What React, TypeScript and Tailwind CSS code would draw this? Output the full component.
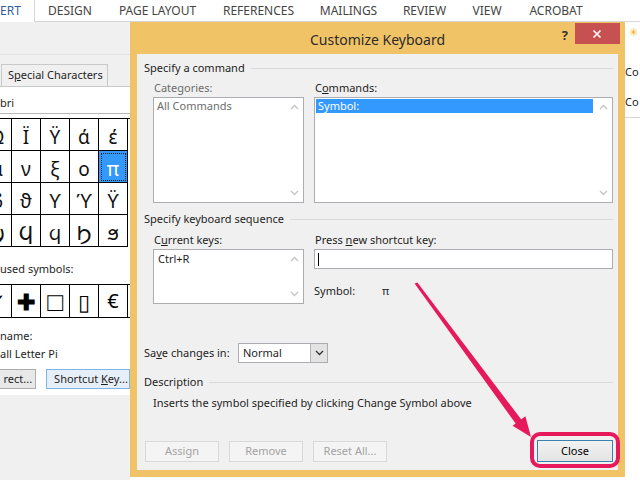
import React from 'react';

const RIBBON_TABS: [string, number][] = [
  ['DESIGN', 70],
  ['PAGE LAYOUT', 105],
  ['REFERENCES', 97],
  ['MAILINGS', 83],
  ['REVIEW', 69],
  ['VIEW', 56],
  ['ACROBAT', 82],
];

const GRID = [
  ['Ω', 'Ϊ', 'Ϋ', 'ά', 'έ'],
  ['μ', 'ν', 'ξ', 'ο', 'π'],
  ['ϐ', 'ϑ', 'ϒ', 'ϓ', 'ϔ'],
  ['ϣ', 'Ϥ', 'ϥ', 'Ϧ', 'ϧ'],
];

const RECENT = ['✓', '✚', '□', '▯', '€'];

function Chevron({ up, color = '#c4c4c4' }: { up?: boolean; color?: string }) {
  return (
    <svg width="9" height="6" viewBox="0 0 9 6">
      <polyline
        points={up ? '1,5 4.5,1.5 8,5' : '1,1 4.5,4.5 8,1'}
        fill="none"
        stroke={color}
        strokeWidth="1.3"
      />
    </svg>
  );
}

function ListBox({ className, children }: { className: string; children?: React.ReactNode }) {
  return (
    <div className={`flex border border-[#abadb3] bg-white ${className}`}>
      <div className="flex-1 p-[1px]">{children}</div>
      <div className="w-[18px] flex flex-col justify-between items-center py-[6px]">
        <Chevron up />
        <Chevron />
      </div>
    </div>
  );
}

function GroupHeading({ children }: { children: React.ReactNode }) {
  return (
    <div className="flex items-center gap-[6px] h-[16px]">
      <span className="text-[#1e1e1e]">{children}</span>
      <div className="flex-1 h-px bg-[#dadada]" />
    </div>
  );
}

function GrayButton({ label }: { label: string }) {
  return (
    <div className="w-[74px] h-[21px] flex items-center justify-center border border-[#d9d9d9] bg-[#f4f4f4] text-[#a3a3a3]">
      {label}
    </div>
  );
}

function SymbolPanel() {
  return (
    <div className="w-[130px] h-full flex flex-col bg-[#f0f0f0] overflow-hidden">
      <div className="h-[33px] shrink-0 border-b border-[#e2e2e2]" />
      <div className="h-[31px] shrink-0 flex items-end">
        <div className="w-[2px] h-[22px] border-r border-[#c9c9c9]" />
        <div className="w-[106px] h-[22px] flex items-center pl-[6px] border border-b-0 border-l-0 border-[#c9c9c9] bg-[#f0f0f0] text-[#1e1e1e] whitespace-nowrap">
          <span>
            S<span className="underline">p</span>ecial Characters
          </span>
        </div>
      </div>
      <div className="h-[309px] shrink-0 bg-white border-t border-[#c9c9c9] flex flex-col">
        <div className="h-[24px] flex items-center pt-[3px] border-b border-[#b8b8b8] mt-[3px] text-[#1e1e1e]">bri</div>
        <div className="mt-[4px] ml-[-17px] grid grid-cols-[repeat(5,29px)] border-t border-black font-['Noto_Sans','DejaVu_Sans',sans-serif] text-[19px] text-[#111]">
          {GRID.flatMap((row, r) =>
            row.map((g, c) => (
              <div
                key={`${r}-${c}`}
                className={`h-[32px] pt-[5px] flex items-center justify-center border-b border-r border-black ${
                  r === 1 && c === 4 ? 'bg-[#3399ff] text-white outline-1 outline-dotted outline-offset-[-3px] outline-[#222]' : ''
                }`}
              >
                {g}
              </div>
            )),
          )}
        </div>
        <div className="mt-[14px] h-[16px] flex items-center text-[#1e1e1e]">used symbols:</div>
        <div className="mt-[7px] ml-[-17px] grid grid-cols-[repeat(5,29px)] border-t border-b border-black text-[20px] text-black">
          {RECENT.map((g, i) => (
            <div key={i} className="h-[32px] flex items-center justify-center border-r border-black">
              {i === 1 ? (
                <span className="font-bold text-[22px]">{g}</span>
              ) : i === 2 ? (
                <span className="text-[26px] leading-none">{g}</span>
              ) : i === 3 ? (
                <span className="text-[22px]">{g}</span>
              ) : (
                g
              )}
            </div>
          ))}
        </div>
        <div className="mt-[10px] h-[16px] flex items-center text-[#1e1e1e]">name:</div>
        <div className="mt-[2px] h-[16px] flex items-center text-[#1e1e1e]">all Letter Pi</div>
        <div className="mt-[7px] flex gap-[10px]">
          <div className="w-[37px] h-[20px] flex items-center justify-end pr-[3px] border border-l-0 border-[#acacac] bg-[#e8e8e8] text-[#1e1e1e]">
            rect...
          </div>
          <div className="w-[86px] h-[20px] flex items-center pl-[7px] border border-[#7eb4ea] bg-[#e6eef7] text-[#1e1e1e] whitespace-nowrap">
            <span>
              Shortcut <span className="underline">K</span>ey...
            </span>
          </div>
        </div>
      </div>
    </div>
  );
}

function CustomizeKeyboard() {
  return (
    <div className="w-[495px] h-[455px] bg-[#f1c367] flex flex-col px-[7px] pb-[7px]">
      <div className="h-[32px] flex items-start justify-between">
        <div className="w-[90px]" />
        <div className="mt-[7px] text-[14px] text-[#2b2b2b]">Customize Keyboard</div>
        <div className="w-[90px] flex items-start justify-end gap-[7px]">
          <span className="mt-[4px] text-[13px] font-bold text-[#333]">?</span>
          <div className="mt-[1px] mr-[-2px] w-[45px] h-[21px] bg-[#c75050] flex items-center justify-center">
            <svg width="10" height="10" viewBox="0 0 10 10">
              <path d="M1.5 1.5 L8.5 8.5 M8.5 1.5 L1.5 8.5" stroke="#fff" strokeWidth="1.6" />
            </svg>
          </div>
        </div>
      </div>
      <div className="flex-1 bg-[#f0f0f0] pl-[7px] pr-[5px] pt-[6px] flex flex-col">
        <GroupHeading>Specify a command</GroupHeading>
        <div className="ml-[9px] mt-[4px] flex gap-[10px]">
          <div className="w-[151px] flex flex-col">
            <div className="h-[17px] pl-[1px] text-[#6d6d6d]">Categories:</div>
            <ListBox className="h-[106px]">
              <div className="pl-[2px] text-[#6d6d6d] leading-[14px]">All Commands</div>
            </ListBox>
          </div>
          <div className="flex-1 flex flex-col">
            <div className="h-[17px] pl-[1px]">
              C<span className="underline">o</span>mmands:
            </div>
            <ListBox className="h-[106px]">
              <div className="pl-[2px] bg-[#3399ff] text-white leading-[14px]">Symbol:</div>
            </ListBox>
          </div>
        </div>
        <div className="mt-[8px]">
          <GroupHeading>Specify keyboard sequence</GroupHeading>
        </div>
        <div className="ml-[9px] mt-[5px] flex gap-[10px]">
          <div className="w-[151px] flex flex-col">
            <div className="h-[17px] pl-[1px]">
              C<span className="underline">u</span>rrent keys:
            </div>
            <ListBox className="h-[55px]">
              <div className="pl-[3px] pt-[1px] leading-[14px]">Ctrl+R</div>
            </ListBox>
          </div>
          <div className="flex-1 flex flex-col">
            <div className="h-[17px] pl-[1px]">
              Press <span className="underline">n</span>ew shortcut key:
            </div>
            <div className="h-[20px] border border-[#abadb3] bg-white flex items-center pl-[3px]">
              <div className="w-px h-[13px] bg-black" />
            </div>
            <div className="mt-[14px] flex items-center h-[16px]">
              <span className="w-[68px]">Symbol:</span>
              <span>π</span>
            </div>
          </div>
        </div>
        <div className="mt-[39px] flex items-center h-[20px]">
          <span className="w-[94px]">
            Sa<span className="underline">v</span>e changes in:
          </span>
          <div className="w-[90px] h-[20px] flex border border-[#abadb3] bg-white">
            <div className="flex-1 pl-[4px] flex items-center">Normal</div>
            <div className="w-[17px] bg-[#e3e3e3] border-l border-[#b5b5b5] flex items-center justify-center">
              <Chevron color="#333" />
            </div>
          </div>
        </div>
        <div className="mt-[11px]">
          <GroupHeading>Description</GroupHeading>
        </div>
        <div className="mt-[5px] ml-[9px] h-[16px] flex items-center">
          Inserts the symbol specified by clicking Change Symbol above
        </div>
        <div className="mt-[29px] ml-[1px] flex items-center">
          <div className="flex gap-[10px]">
            <GrayButton label="Assign" />
            <GrayButton label="Remove" />
            <GrayButton label="Reset All..." />
          </div>
          <div className="ml-auto w-[76px] h-[22px] flex items-center justify-center border border-[#3c7fb1] bg-gradient-to-b from-[#f2f2f2] to-[#e4e4e4] text-black">
            Close
          </div>
        </div>
      </div>
    </div>
  );
}

function RightStrip() {
  return (
    <div className="w-[15px] h-full bg-white flex flex-col overflow-hidden">
      <div className="h-[34px] flex items-start pt-[2px] pl-[4px] text-[11px] text-[#f0b400]">✳</div>
      <div className="h-[32px] flex items-center text-[#1e1e1e]">Co</div>
      <div className="h-[30px] flex items-center text-[#1e1e1e] border-b border-[#d4d4d4]">Co</div>
    </div>
  );
}

export default function App() {
  return (
    <div className="relative w-[640px] h-[480px] overflow-hidden bg-white font-['Noto_Sans',sans-serif] text-[11px] text-[#1e1e1e]">
      <div className="h-[22px] flex items-stretch bg-white">
        <div className="w-[35px] flex items-center border-r border-[#d5d5d5] text-[12px] text-[#2f5e99]">ERT</div>
        {RIBBON_TABS.map(([t, w]) => (
          <div
            key={t}
            style={{ width: w }}
            className="flex items-center justify-center border-b border-[#d5d5d5] text-[12px] text-[#444]"
          >
            {t}
          </div>
        ))}
        <div className="flex-1 border-b border-[#d5d5d5]" />
      </div>
      <div className="h-[458px] flex">
        <SymbolPanel />
        <div className="flex flex-col">
          <CustomizeKeyboard />
          <div className="flex-1 bg-white" />
        </div>
        <RightStrip />
      </div>
      <svg className="absolute inset-0 pointer-events-none" width="640" height="480" viewBox="0 0 640 480">
        <polygon points="414.6,283.6 417.4,282.4 524.5,423.8 518.9,428" fill="#e5195c" />
        <polygon points="531,437 512.6,425.8 525.4,416.2" fill="#e5195c" />
        <rect x="532" y="434" width="86" height="32" rx="8" fill="none" stroke="#e5195c" strokeWidth="4" />
      </svg>
    </div>
  );
}
